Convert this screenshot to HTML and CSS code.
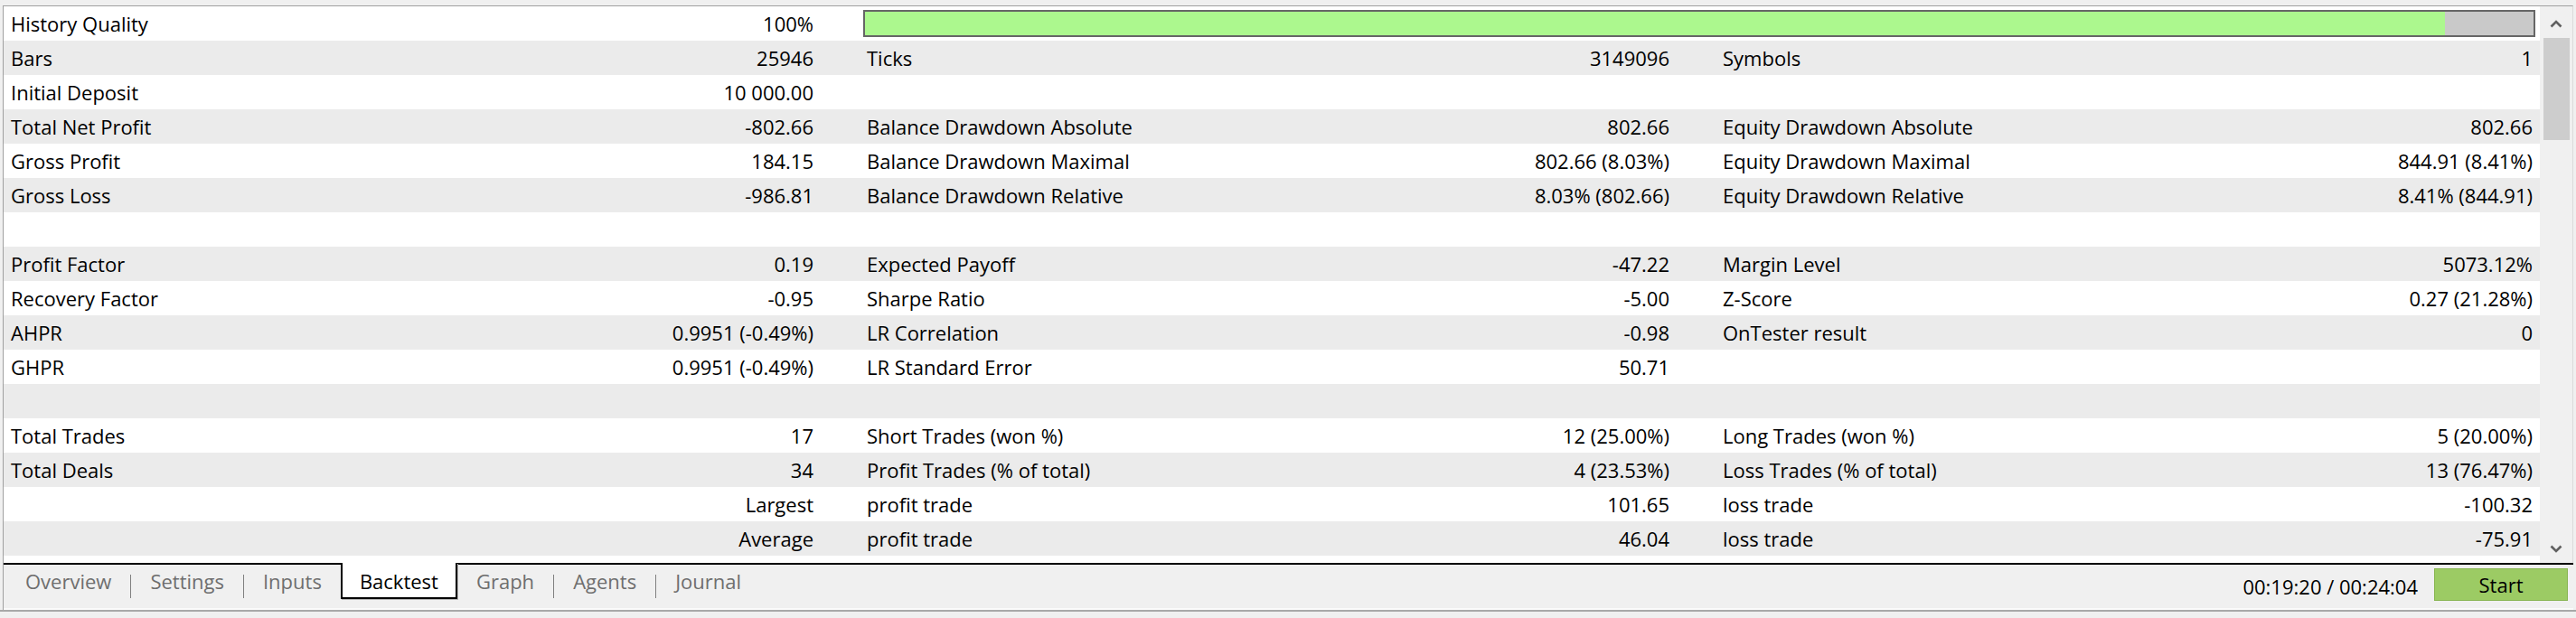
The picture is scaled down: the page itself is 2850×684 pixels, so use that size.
FILE: index.html
```html
<!DOCTYPE html>
<html>
<head>
<meta charset="utf-8">
<title>Backtest</title>
<link rel="stylesheet" href="styles.css">
</head>
<body>
<div class="app">
  <div class="main">
    <div class="list">
      <div class="rows">
        <div class="row">
          <div class="cell"><span>History Quality</span><span>100%</span></div>
          <div class="bar"><div class="fill" style="width:94.7%"></div></div>
        </div>
        <div class="row">
          <div class="cell"><span>Bars</span><span>25946</span></div>
          <div class="cell"><span>Ticks</span><span>3149096</span></div>
          <div class="cell"><span>Symbols</span><span>1</span></div>
        </div>
        <div class="row">
          <div class="cell"><span>Initial Deposit</span><span>10 000.00</span></div>
        </div>
        <div class="row">
          <div class="cell"><span>Total Net Profit</span><span>-802.66</span></div>
          <div class="cell"><span>Balance Drawdown Absolute</span><span>802.66</span></div>
          <div class="cell"><span>Equity Drawdown Absolute</span><span>802.66</span></div>
        </div>
        <div class="row">
          <div class="cell"><span>Gross Profit</span><span>184.15</span></div>
          <div class="cell"><span>Balance Drawdown Maximal</span><span>802.66 (8.03%)</span></div>
          <div class="cell"><span>Equity Drawdown Maximal</span><span>844.91 (8.41%)</span></div>
        </div>
        <div class="row">
          <div class="cell"><span>Gross Loss</span><span>-986.81</span></div>
          <div class="cell"><span>Balance Drawdown Relative</span><span>8.03% (802.66)</span></div>
          <div class="cell"><span>Equity Drawdown Relative</span><span>8.41% (844.91)</span></div>
        </div>
        <div class="row"></div>
        <div class="row">
          <div class="cell"><span>Profit Factor</span><span>0.19</span></div>
          <div class="cell"><span>Expected Payoff</span><span>-47.22</span></div>
          <div class="cell"><span>Margin Level</span><span>5073.12%</span></div>
        </div>
        <div class="row">
          <div class="cell"><span>Recovery Factor</span><span>-0.95</span></div>
          <div class="cell"><span>Sharpe Ratio</span><span>-5.00</span></div>
          <div class="cell"><span>Z-Score</span><span>0.27 (21.28%)</span></div>
        </div>
        <div class="row">
          <div class="cell"><span>AHPR</span><span>0.9951 (-0.49%)</span></div>
          <div class="cell"><span>LR Correlation</span><span>-0.98</span></div>
          <div class="cell"><span>OnTester result</span><span>0</span></div>
        </div>
        <div class="row">
          <div class="cell"><span>GHPR</span><span>0.9951 (-0.49%)</span></div>
          <div class="cell"><span>LR Standard Error</span><span>50.71</span></div>
        </div>
        <div class="row"></div>
        <div class="row">
          <div class="cell"><span>Total Trades</span><span>17</span></div>
          <div class="cell"><span>Short Trades (won %)</span><span>12 (25.00%)</span></div>
          <div class="cell"><span>Long Trades (won %)</span><span>5 (20.00%)</span></div>
        </div>
        <div class="row">
          <div class="cell"><span>Total Deals</span><span>34</span></div>
          <div class="cell"><span>Profit Trades (% of total)</span><span>4 (23.53%)</span></div>
          <div class="cell"><span>Loss Trades (% of total)</span><span>13 (76.47%)</span></div>
        </div>
        <div class="row">
          <div class="cell right"><span>Largest</span></div>
          <div class="cell"><span>profit trade</span><span>101.65</span></div>
          <div class="cell"><span>loss trade</span><span>-100.32</span></div>
        </div>
        <div class="row">
          <div class="cell right"><span>Average</span></div>
          <div class="cell"><span>profit trade</span><span>46.04</span></div>
          <div class="cell"><span>loss trade</span><span>-75.91</span></div>
        </div>
      </div>
      <div class="scroll">
        <div class="arrow up">
          <svg width="14" height="10" viewBox="0 0 14 10"><path d="M1.5 8.5 L7 3 L12.5 8.5" fill="none" stroke="#606060" stroke-width="2.6"/></svg>
        </div>
        <div class="thumb"></div>
        <div class="track"></div>
        <div class="arrow down">
          <svg width="14" height="10" viewBox="0 0 14 10"><path d="M1.5 1.5 L7 7 L12.5 1.5" fill="none" stroke="#606060" stroke-width="2.6"/></svg>
        </div>
      </div>
    </div>
    <div class="tabbar">
      <div class="tabs">
        <div class="tab">Overview</div>
        <div class="sep"></div>
        <div class="tab">Settings</div>
        <div class="sep"></div>
        <div class="tab">Inputs</div>
        <div class="tab active">Backtest</div>
        <div class="tab">Graph</div>
        <div class="sep"></div>
        <div class="tab">Agents</div>
        <div class="sep"></div>
        <div class="tab">Journal</div>
      </div>
      <div class="status">
        <span class="time">00:19:20 / 00:24:04</span>
        <div class="start">Start</div>
      </div>
    </div>
    <div class="strip"></div>
  </div>
  <div class="bottom"></div>
</div>
</body>
</html>
```

FILE: styles.css
```css
html, body {
  margin: 0;
  padding: 0;
}
body {
  background: #f0f0f0;
  font-family: "Open Sans", "Liberation Sans", sans-serif;
  font-size: 22px;
  color: #000;
}
.app {
  width: 2850px;
  height: 684px;
  overflow: hidden;
  display: flex;
  flex-direction: column;
}
.main {
  margin: 6px 0 0 3px;
  width: 2843px;
  border-left: 1px solid #a0a0a0;
}
.list {
  display: flex;
  height: 616px;
  border-top: 1px solid #a0a0a0;
  border-right: 1px solid #dadada;
  background: #fff;
}
.rows {
  width: 2806px;
  flex: none;
}
.row {
  display: grid;
  grid-template-columns: 888px 888px 896px;
  column-gap: 59px;
  padding: 0 8px;
  height: 38px;
  align-items: center;
  white-space: nowrap;
}
.row:nth-child(even) {
  background: #ebebeb;
}
.cell {
  display: flex;
  justify-content: space-between;
}
.cell.right {
  justify-content: flex-end;
}
.bar {
  grid-column: 2 / 4;
  margin: 0 -3px 0 -4px;
  height: 30px;
  box-sizing: border-box;
  border: 2px solid #666;
  background: #c9c9c9;
}
.fill {
  height: 100%;
  background: #acf88e;
}
.scroll {
  flex: 1;
  background: #f0f0f0;
  display: flex;
  flex-direction: column;
  align-items: center;
}
.arrow {
  display: flex;
  align-items: center;
  justify-content: center;
  width: 100%;
}
.arrow.up {
  height: 35px;
  padding-top: 2px;
  box-sizing: border-box;
}
.arrow.down {
  height: 30px;
}
.thumb {
  width: 29px;
  height: 113px;
  background: #cdcdcd;
}
.track {
  flex: 1;
}
.tabbar {
  height: 48px;
  border-top: 2px solid #000;
  background: #f0f0f0;
  display: flex;
  justify-content: space-between;
}
.tabs {
  display: flex;
  align-items: flex-start;
  padding-left: 3px;
}
.tab {
  padding: 0 21px;
  height: 36px;
  line-height: 36px;
  color: #6e6e6e;
  white-space: nowrap;
}
.tab.active {
  margin-top: -2px;
  padding: 2px 19px 0;
  background: #fff;
  color: #000;
  border: 2px solid #000;
  border-top: 0;
  box-shadow: 1px 1px 0 #b4b4b4;
}
.sep {
  width: 1px;
  height: 26px;
  margin-top: 11px;
  background: #808080;
}
.status {
  display: flex;
  align-items: center;
  gap: 18px;
  padding-right: 6px;
  margin-top: 4px;
  height: 36px;
}
.time {
  white-space: nowrap;
  padding-top: 3px;
}
.start {
  width: 148px;
  height: 36px;
  box-sizing: border-box;
  background: #9ccb64;
  border: 1px solid #88b552;
  text-align: center;
  line-height: 34px;
}
.strip {
  height: 2px;
  background: #fbfbfb;
}
.bottom {
  flex: 1;
  border-top: 2px solid #a8a8a8;
  background: #f0f0f0;
}
```
